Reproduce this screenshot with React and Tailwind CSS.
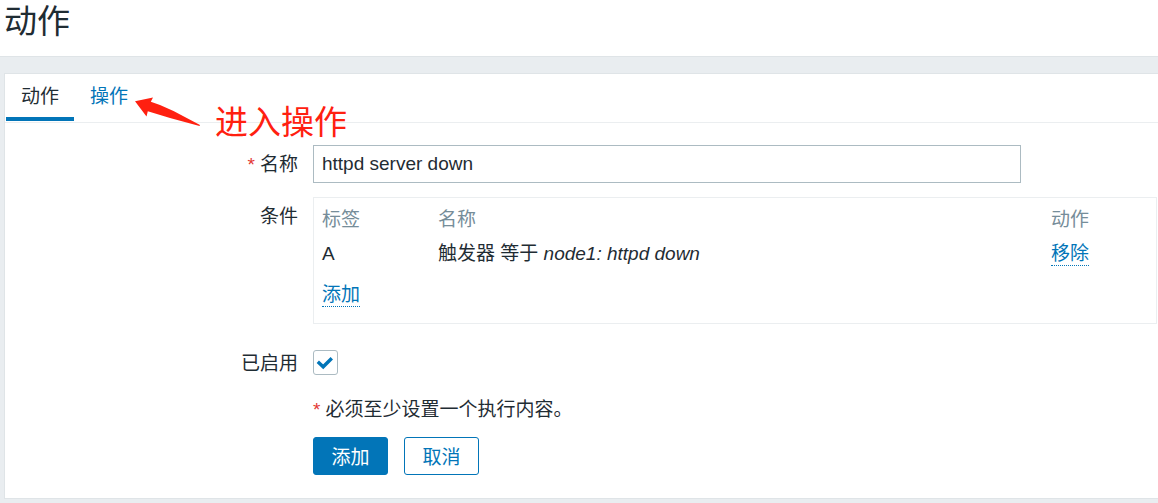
import { useState } from "react";

function Required() {
  return <span className="mr-[5px] text-[#e33734]">*</span>;
}

function Tab({ active, children, ...props }) {
  return (
    <button
      type="button"
      role="tab"
      aria-selected={active}
      className={
        active
          ? "h-[47px] border-b-4 border-[#0275b8] px-[15px] pt-1 text-[#1f2c33]"
          : "h-[47px] border-b-4 border-transparent px-[15px] pt-1 text-[#0275b8]"
      }
      {...props}
    >
      {children}
    </button>
  );
}

function ActionLink({ children }) {
  return (
    <a href="#" className="inline-block border-b border-dotted border-[#0275b8] leading-[22px] text-[#0275b8]">
      {children}
    </a>
  );
}

function Row({ label, className, children }) {
  return (
    <div className={`grid grid-cols-[293px_minmax(0,1fr)] gap-x-[15px] ${className}`}>
      <div className="pt-0.5 text-right leading-9">{label}</div>
      <div className="min-w-0">{children}</div>
    </div>
  );
}

export default function App() {
  const [enabled, setEnabled] = useState(true);
  const [name, setName] = useState("httpd server down");

  return (
    <div className="min-h-screen bg-[#e9edf0] font-['Liberation_Sans','Noto_Sans_CJK_SC',sans-serif] text-[19px] text-[#1f2c33]">
      <header className="border-b border-[#dfe4e7] bg-white px-1 pb-3">
        <h1 className="text-[33px] leading-[44px]">动作</h1>
      </header>

      <main className="pt-4 pl-1">
        <form
          className="border-y border-l border-[#dfe4e7] bg-white pb-[23px]"
          onSubmit={(e) => e.preventDefault()}
        >
          <div className="relative">
            <div role="tablist" className="flex gap-px border-b border-[#ebeef0] pb-px pl-px">
              <Tab active>动作</Tab>
              <Tab active={false}>操作</Tab>
            </div>
            <div className="pointer-events-none absolute top-6 left-[130px] flex items-start text-[#ff2010]">
              <svg width="66" height="28" viewBox="0 0 66 28" fill="currentColor" className="overflow-visible" aria-hidden="true">
                <path d="M0 3.2 L18 -0.4 L15.8 3.8 L25 7 L38.5 13 L65 27 L64.5 28 L35 20 L12.8 13.2 L11.5 18.4 Z" />
              </svg>
              <span className="ml-3.5 text-[33px] leading-[50px]">进入操作</span>
            </div>
          </div>

          <Row
            className="mt-[22px]"
            label={
              <label htmlFor="name">
                <Required />
                名称
              </label>
            }
          >
            <input
              id="name"
              type="text"
              value={name}
              onChange={(e) => setName(e.target.value)}
              className="block h-[38px] w-full max-w-[708px] border border-[#acbbc2] px-2 outline-none"
            />
          </Row>

          <Row className="mt-3.5 pr-px" label="条件">
            <div className="border border-[#ebeef0] pt-[5px] pb-1">
              <table className="w-full table-fixed text-left">
                <thead>
                  <tr className="h-[34px] text-[#768d99]">
                    <th className="w-[116px] px-2 font-normal">标签</th>
                    <th className="px-2 font-normal">名称</th>
                    <th className="w-[113px] px-2 font-normal">动作</th>
                  </tr>
                </thead>
                <tbody>
                  <tr className="h-[34px]">
                    <td className="px-2">A</td>
                    <td className="px-2">
                      触发器 等于 <em>node1: httpd down</em>
                    </td>
                    <td className="px-2">
                      <ActionLink>移除</ActionLink>
                    </td>
                  </tr>
                  <tr className="h-12">
                    <td className="px-2" colSpan={3}>
                      <ActionLink>添加</ActionLink>
                    </td>
                  </tr>
                </tbody>
              </table>
            </div>
          </Row>

          <Row className="mt-5" label={<label htmlFor="enabled">已启用</label>}>
            <div className="relative mt-1.5 size-[25px]">
              <input
                id="enabled"
                type="checkbox"
                checked={enabled}
                onChange={(e) => setEnabled(e.target.checked)}
                className="peer block size-full appearance-none rounded-[3px] border border-[#acbbc2] bg-white"
              />
              <svg
                viewBox="0 0 25 25"
                className="pointer-events-none absolute inset-0 hidden size-full peer-checked:block"
                fill="none"
                stroke="#0275b8"
                strokeWidth="3.4"
                aria-hidden="true"
              >
                <path d="M4.8 11.8 L10.2 16.8 L18.8 8.2" />
              </svg>
            </div>
          </Row>

          <Row className="mt-2">
            <p className="leading-10">
              <Required />
              必须至少设置一个执行内容。
            </p>
            <div className="mt-[7px] flex gap-4">
              <button
                type="submit"
                className="h-[38px] min-w-[75px] rounded-[3px] border border-[#0275b8] bg-[#0275b8] px-4 pt-1 text-white"
              >
                添加
              </button>
              <button
                type="button"
                className="h-[38px] min-w-[75px] rounded-[3px] border border-[#0275b8] bg-white px-4 pt-1 text-[#0275b8]"
              >
                取消
              </button>
            </div>
          </Row>
        </form>
      </main>
    </div>
  );
}
